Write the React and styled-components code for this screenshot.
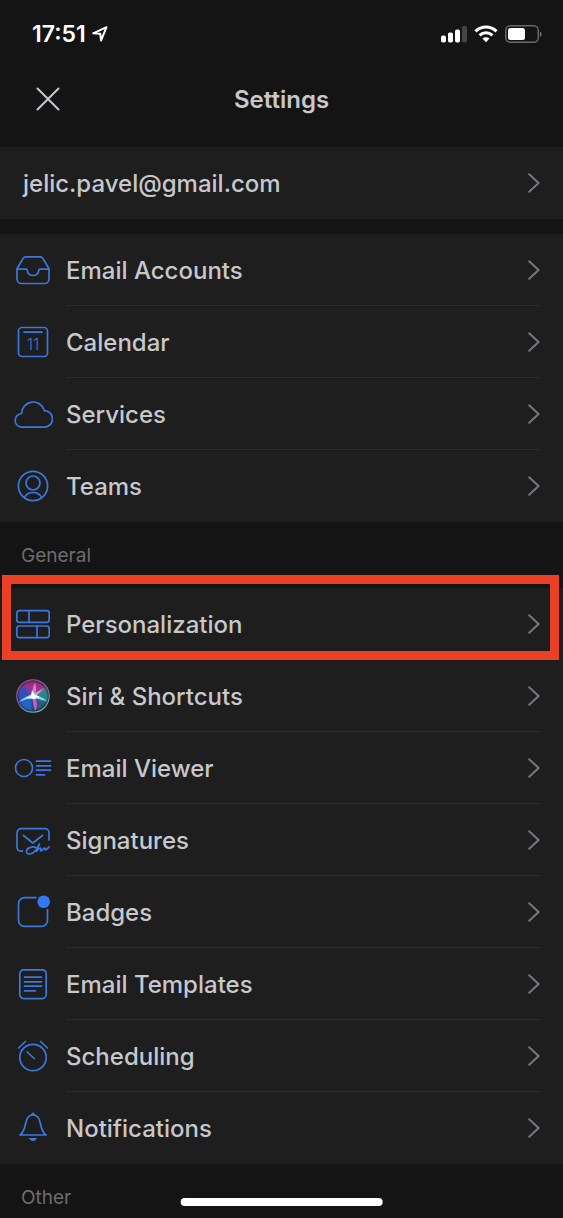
import React from 'react';
import styled, {createGlobalStyle} from 'styled-components';

const GlobalStyle = createGlobalStyle`
	* {
		box-sizing: border-box;
	}
	body {
		margin: 0;
		background: #141414;
		color: #c7c7cc;
		font-family: Inter, "Liberation Sans", sans-serif;
	}
`

const InboxIcon = () => (
	<Icon>
		<path d="M12.5 6.8h15a2.5 2.5 0 0 1 2.2 1.3l5.6 9.4a4 4 0 0 1 .7 2.2V29a4.5 4.5 0 0 1-4.5 4.5h-23A4.5 4.5 0 0 1 4 29v-9.3a4 4 0 0 1 .7-2.2l5.6-9.4a2.5 2.5 0 0 1 2.2-1.3z"/>
		<path d="M4 19.2h9a1.3 1.3 0 0 1 1.3 1.3 5.7 5 0 0 0 11.4 0 1.3 1.3 0 0 1 1.3-1.3h9"/>
	</Icon>
)

const CalendarIcon = () => (
	<Icon>
		<rect x="5.5" y="5.5" width="29" height="29" rx="3.5"/>
		<path d="M11 10.2h18"/>
		<text x="20" y="27.5" textAnchor="middle">11</text>
	</Icon>
)

const CloudIcon = () => (
	<Icon>
		<path d="M8 33.2A6.9 6.9 0 0 1 8.6 19.5 11.6 11.6 0 0 1 31.4 16.6 8.3 8.3 0 0 1 31 33.2z"/>
	</Icon>
)

const TeamsIcon = () => (
	<Icon>
		<circle cx="20" cy="20" r="14.6"/>
		<circle cx="20" cy="17" r="7"/>
		<path d="M11.5 31.5c1.500-3.200 4.800-5 8.500-5s7 1.800 8.500 5"/>
	</Icon>
)

const PersonalizationIcon = () => (
	<Icon>
		<rect x="3.8" y="6.7" width="32.4" height="11.6" rx="2.5"/>
		<path d="M16 6.7v11.6"/>
		<rect x="3.8" y="22" width="32.4" height="11.6" rx="2.5"/>
		<path d="M24 22v11.6"/>
	</Icon>
)

const SiriIcon = () => (
	<Icon>
		<defs>
			<linearGradient id="siri-ring" x1="0.2" y1="0" x2="0.8" y2="1">
				<stop offset="0" stopColor="#b0468c"/>
				<stop offset="0.5" stopColor="#6f74a8"/>
				<stop offset="1" stopColor="#5fc9a4"/>
			</linearGradient>
			<filter id="siri-soft" x="-30%" y="-30%" width="160%" height="160%">
				<feGaussianBlur stdDeviation="1.6"/>
			</filter>
			<filter id="siri-beam" x="-30%" y="-30%" width="160%" height="160%">
				<feGaussianBlur stdDeviation="0.5"/>
			</filter>
			<clipPath id="siri-clip">
				<circle cx="20" cy="20" r="15.2"/>
			</clipPath>
		</defs>
		<g clipPath="url(#siri-clip)" stroke="none">
			<circle cx="20" cy="20" r="16" fill="#1b1f4c"/>
			<g filter="url(#siri-soft)">
				<path d="M6 14C10 3 28 2 33 13l-12 7z" fill="#a82c82"/>
				<path d="M4 14l9-5 7 12-14 8z" fill="#3c49b8"/>
				<path d="M5 26l14-6 1 15c-7 0-12-4-15-9z" fill="#2468c8"/>
				<path d="M21 20l12-8c4 5 3 12 1 16z" fill="#28868e"/>
				<path d="M20 21l13 5c-2 5-6 8-10 9z" fill="#2f5a80"/>
			</g>
			<g filter="url(#siri-beam)">
				<path d="M6 26c4-4 9-6 13-8 5 1 10 3 15 7-5-1-9-2-13-3-5 0-10 2-15 4z" fill="#86dbe8"/>
				<path d="M20 21c-1-5-1-9 2-14 2 4 1 9 0 13z" fill="#c97fd2"/>
				<path d="M19 20c1 5 1 10 3 15 3-4 2-10 0-15z" fill="#cf5fae"/>
				<path d="M19 19l12-7-9 9z" fill="#a7b9e0"/>
				<path d="M13 22l5-2 1-6 2.500 4.500L27 21l-6 2z" fill="#fff"/>
			</g>
		</g>
		<circle cx="20" cy="20" r="16.200" stroke="url(#siri-ring)" strokeWidth="1.200"/>
	</Icon>
)

const ViewerIcon = () => (
	<Icon>
		<circle cx="11" cy="20" r="8.5"/>
		<path d="M23.500 13.200h14M23.500 17.800h14M23.500 22.200h14M23.500 26.800h8"/>
	</Icon>
)

const SignatureIcon = () => (
	<Icon>
		<path d="M9.500 31.200H8a4 4 0 0 1-4-4V12.700a4 4 0 0 1 4-4h24a4 4 0 0 1 4 4V20"/>
		<path d="M10.500 15.500l9.300 7.500 9.700-7.500"/>
		<path d="M23 27.500c-4-1.500-9.500.5-9.500 4 0 4 6 3 9-1 1.800-2.500 2.800-4 4-6.500-1.500 3-2.800 5.500-3 7.500 1.500-2 2.800-3.500 4-3.500s-.8 3 .7 3 2-3 3.300-3-.3 2 1 1.800 2.500-1.800 3.700-3"/>
	</Icon>
)

const BadgeIcon = () => (
	<Icon>
		<path d="M23 5.700H11.500a6 6 0 0 0-6 6v16.600a6 6 0 0 0 6 6h17a6 6 0 0 0 6-6V17.500"/>
		<circle cx="30.700" cy="9.700" r="6.300" fill="#3478f6" stroke="none"/>
	</Icon>
)

const TemplateIcon = () => (
	<Icon>
		<rect x="6.800" y="5.800" width="26.400" height="28.800" rx="4"/>
		<path d="M11.500 13.200h17M11.500 17.800h17M11.500 22.200h17M11.500 26.800h11"/>
	</Icon>
)

const ClockIcon = () => (
	<Icon>
		<circle cx="20" cy="21.500" r="13.200"/>
		<path d="M14.200 16l7 6.500M5.500 12l7-6.500M34.500 12l-7-6.500"/>
	</Icon>
)

const BellIcon = () => (
	<Icon>
		<path d="M7 27c3.500-2.500 4.700-6.500 5.600-11.500C13.500 10 16 7 20 7s6.500 3 7.400 8.500c.9 5 2.100 9 5.600 11.500z"/>
		<path d="M18.500 6.500a1.500 1.500 0 0 1 3 0zM16.500 30.500h7c-.7 1.300-2 2-3.500 2s-2.800-.7-3.500-2z" fill="#3b77dc" strokeWidth="1"/>
	</Icon>
)

const accountItems = [
	{label: 'Email Accounts', icon: InboxIcon},
	{label: 'Calendar', icon: CalendarIcon},
	{label: 'Services', icon: CloudIcon},
	{label: 'Teams', icon: TeamsIcon},
]

const generalItems = [
	{label: 'Personalization', icon: PersonalizationIcon, marked: true},
	{label: 'Siri & Shortcuts', icon: SiriIcon},
	{label: 'Email Viewer', icon: ViewerIcon},
	{label: 'Signatures', icon: SignatureIcon},
	{label: 'Badges', icon: BadgeIcon},
	{label: 'Email Templates', icon: TemplateIcon},
	{label: 'Scheduling', icon: ClockIcon},
	{label: 'Notifications', icon: BellIcon},
]

function Chevron() {
	return (
		<ChevronSvg viewBox="0 0 12 20" aria-hidden="true">
			<path d="M1.200 1.200L10.600 10l-9.400 8.800"/>
		</ChevronSvg>
	)
}

function SettingsList({items}) {
	return (
		<List>
			{items.map(({label, icon: ItemIcon, marked}) => (
				<Item key={label} $marked={marked}>
					<RowLink href="#">
						<ItemIcon/>
						<RowBody>
							<Label>{label}</Label>
							<Chevron/>
						</RowBody>
					</RowLink>
				</Item>
			))}
		</List>
	)
}

function StatusBar() {
	return (
		<StatusWrapper>
			<Clock>
				17:51
				<svg width="16" height="16" viewBox="0 0 16 16" aria-hidden="true">
					<path d="M1.200 7.300L14.500 1.200 9 14.500 8.300 7.800z" fill="none" stroke="#fff" strokeWidth="2" strokeLinejoin="round"/>
				</svg>
			</Clock>
			<StatusIcons>
				<svg width="26" height="18" viewBox="0 0 26 18" fill="#fff" aria-hidden="true">
					<rect x="0" y="10.500" width="5" height="7" rx="1.800"/>
					<rect x="7" y="7.500" width="5" height="10" rx="1.800"/>
					<rect x="14" y="4.500" width="5" height="13" rx="1.800"/>
					<rect x="21" y="1" width="5" height="16.500" rx="1.800" fill="#454545"/>
				</svg>
				<svg width="24" height="18" viewBox="0 0 24 18" fill="none" stroke="#fff" strokeWidth="3" aria-hidden="true">
					<path d="M1.500 6.300a15.200 15.200 0 0 1 21 0"/>
					<path d="M5.600 10.400a9.300 9.300 0 0 1 12.800 0"/>
					<path d="M12 17.200l-3.500-3.600a5 5 0 0 1 7 0z" fill="#fff" stroke="none"/>
				</svg>
				<svg width="37" height="18" viewBox="0 0 37 18" aria-hidden="true">
					<rect x="0.750" y="0.750" width="32.500" height="16.500" rx="4.500" fill="none" stroke="#69696b" strokeWidth="1.500"/>
					<rect x="3" y="3" width="17" height="12" rx="2.500" fill="#fff"/>
					<path d="M34.800 6.500c2.600 1 2.600 4.400 0 5.400z" fill="#69696b"/>
				</svg>
			</StatusIcons>
		</StatusWrapper>
	)
}

export default function App() {
	return (
		<Page>
			<GlobalStyle/>
			<StatusBar/>
			<Header>
				<CloseButton type="button" aria-label="Close">
					<svg width="24" height="24" viewBox="0 0 24 24" aria-hidden="true">
						<path d="M1.500 1.500l21 21M22.500 1.500l-21 21" stroke="#c7c7cc" strokeWidth="2" strokeLinecap="round"/>
					</svg>
				</CloseButton>
				<Title>Settings</Title>
			</Header>
			<AccountLink href="#">
				<Label>jelic.pavel@gmail.com</Label>
				<Chevron/>
			</AccountLink>
			<SettingsList items={accountItems}/>
			<SectionTitle>General</SectionTitle>
			<SettingsList items={generalItems}/>
			<SectionTitle>Other</SectionTitle>
			<HomeIndicator/>
		</Page>
	)
}

const Page = styled.main`
	display: flex;
	flex-direction: column;
	min-height: 100vh;
`

const StatusWrapper = styled.div`
	display: flex;
	align-items: center;
	justify-content: space-between;
	height: 68px;
	padding: 0 21px 0 32px;
`

const Clock = styled.div`
	display: flex;
	align-items: center;
	gap: 6px;
	color: #fff;
	font-size: 23px;
	font-weight: 600;
	line-height: 28px;
`

const StatusIcons = styled.div`
	display: flex;
	align-items: center;
	gap: 7px;
`

const Header = styled.header`
	display: grid;
	grid-template-columns: 48px 1fr 48px;
	align-items: center;
	height: 79px;
	padding: 0 24px 18px;
`

const CloseButton = styled.button`
	display: flex;
	align-items: center;
	justify-content: center;
	height: 48px;
	padding: 0;
	border: 0;
	background: none;
	cursor: pointer;
`

const Title = styled.h1`
	margin: 0;
	padding-top: 2px;
	font-size: 24px;
	font-weight: 600;
	line-height: 32px;
	text-align: center;
`

const Label = styled.span`
	padding-top: 2px;
	font-size: 24px;
	font-weight: 500;
	line-height: 32px;
`

const AccountLink = styled.a`
	display: flex;
	align-items: center;
	justify-content: space-between;
	height: 72px;
	margin-bottom: 15px;
	padding: 0 23px;
	background: #1e1e1e;
	color: inherit;
	text-decoration: none;
`

const List = styled.ul`
	margin: 0;
	padding: 0;
	background: #1e1e1e;
	list-style: none;
`

const RowBody = styled.div`
	display: flex;
	flex: 1;
	align-items: center;
	justify-content: space-between;
	height: 72px;
	border-bottom: 1px solid #2b2b2d;
`

const RowLink = styled.a`
	display: flex;
	align-items: center;
	gap: 13px;
	padding: 0 23px 0 13px;
	color: inherit;
	text-decoration: none;
`

const Item = styled.li`
	position: relative;
	&:last-child ${RowBody} {
		border-bottom-color: transparent;
	}
	&::after {
		content: "";
		display: ${({$marked}) => ($marked ? 'block' : 'none')};
		position: absolute;
		top: -13px;
		right: 4px;
		bottom: 0;
		left: 2px;
		border: 9px solid #ea4025;
		pointer-events: none;
	}
`

const Icon = styled.svg.attrs({viewBox: '0 0 40 40', 'aria-hidden': true})`
	flex: none;
	width: 40px;
	height: 40px;
	fill: none;
	stroke: #3b77dc;
	stroke-width: 1.7;
	stroke-linecap: round;
	stroke-linejoin: round;
	text {
		fill: #3b77dc;
		stroke: none;
		font-size: 16px;
		font-weight: 300;
	}
`

const ChevronSvg = styled.svg`
	flex: none;
	width: 12px;
	height: 20px;
	fill: none;
	stroke: #77777b;
	stroke-width: 2;
	stroke-linecap: round;
	stroke-linejoin: round;
`

const SectionTitle = styled.h2`
	margin: 0;
	padding: 22px 21px 0;
	color: #6c6c70;
	font-size: 19px;
	font-weight: 400;
	line-height: 24px;
	& + ${List} {
		margin-top: 20px;
	}
`

const HomeIndicator = styled.div`
	position: fixed;
	bottom: 12px;
	left: 50%;
	width: 36%;
	height: 8px;
	border-radius: 4px;
	background: #fff;
	transform: translateX(-50%);
`
